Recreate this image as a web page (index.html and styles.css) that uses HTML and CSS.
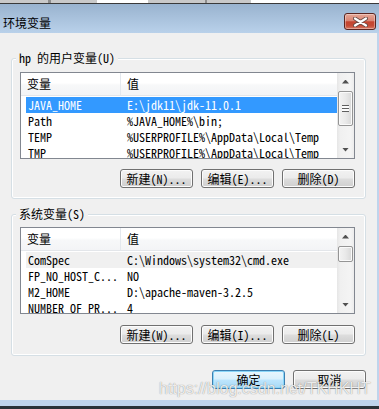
FILE: index.html
```html
<!DOCTYPE html>
<html lang="zh-CN">
<head>
<meta charset="utf-8">
<title>环境变量</title>
<link rel="stylesheet" href="styles.css">
</head>
<body>
<div class="screen">
  <div class="tabs">
    <span class="seg s48"></span><span class="seg sep"></span><span class="seg s46"></span><span class="seg white s51"></span><span class="seg s57"></span><span class="seg sep2"></span><span class="seg s44"></span><span class="seg white grow"></span>
  </div>
  <div class="window">
    <div class="titlebar">
      <span class="title">环境变量</span>
      <span class="close">
        <svg width="15" height="10" viewBox="0 0 15 10">
          <path d="M2 1.5 L13 8.5 M13 1.5 L2 8.5" stroke="#6a4a44" stroke-width="4" stroke-linecap="round"/>
          <path d="M2 1.5 L13 8.5 M13 1.5 L2 8.5" stroke="#ffffff" stroke-width="2.2" stroke-linecap="round"/>
        </svg>
      </span>
    </div>
    <div class="client">
      <div class="group">
        <div class="legend">hp 的用户变量(U)</div>
        <div class="listview">
          <div class="lv-main">
            <div class="lv-header"><div class="hcol h1">变量</div><div class="hcol h2">值</div></div>
            <div class="rows">
              <div class="row selected"><span class="c1">JAVA_HOME</span><span class="c2">E:\jdk11\jdk-11.0.1</span></div>
              <div class="row"><span class="c1">Path</span><span class="c2">%JAVA_HOME%\bin;</span></div>
              <div class="row"><span class="c1">TEMP</span><span class="c2">%USERPROFILE%\AppData\Local\Temp</span></div>
              <div class="row"><span class="c1">TMP</span><span class="c2">%USERPROFILE%\AppData\Local\Temp</span></div>
            </div>
          </div>
          <div class="scrollbar">
            <div class="sb-btn"><span class="arrow up"></span></div>
            <div class="track"><div class="thumb thumb-lg"><span class="grip"></span></div></div>
            <div class="sb-btn"><span class="arrow down"></span></div>
          </div>
        </div>
        <div class="btnrow">
          <span class="btn">新建(N)...</span>
          <span class="btn">编辑(E)...</span>
          <span class="btn">删除(D)</span>
        </div>
      </div>

      <div class="group group2">
        <div class="legend">系统变量(S)</div>
        <div class="listview lv2">
          <div class="lv-main">
            <div class="lv-header"><div class="hcol h1">变量</div><div class="hcol h2">值</div></div>
            <div class="rows">
              <div class="row inactive"><span class="c1">ComSpec</span><span class="c2">C:\Windows\system32\cmd.exe</span></div>
              <div class="row"><span class="c1">FP_NO_HOST_C...</span><span class="c2">NO</span></div>
              <div class="row"><span class="c1">M2_HOME</span><span class="c2">D:\apache-maven-3.2.5</span></div>
              <div class="row"><span class="c1">NUMBER_OF_PR...</span><span class="c2">4</span></div>
            </div>
          </div>
          <div class="scrollbar">
            <div class="sb-btn"><span class="arrow up"></span></div>
            <div class="track"><div class="thumb thumb-sm"></div></div>
            <div class="sb-btn"><span class="arrow down"></span></div>
          </div>
        </div>
        <div class="btnrow">
          <span class="btn">新建(W)...</span>
          <span class="btn">编辑(I)...</span>
          <span class="btn">删除(L)</span>
        </div>
      </div>

      <div class="dlgbtns">
        <span class="btn default">确定</span>
        <span class="btn">取消</span>
      </div>
    </div>
  </div>
  <div class="watermark">https://blog.csdn.net/TKHKHT</div>
</div>
</body>
</html>
```
FILE: styles.css
```css
* { box-sizing: border-box; }
html, body { margin: 0; padding: 0; }
body {
  width: 379px;
  height: 409px;
  overflow: hidden;
  background: #ffffff;
  font-family: "Noto Sans Mono CJK SC", "Noto Sans CJK SC", "Liberation Mono", monospace;
  font-size: 12px;
  color: #000;
}
.screen { position: relative; width: 379px; height: 409px; }

/* top strip */
.tabs { display: flex; height: 4px; border-bottom: 1px solid #3a3a3a; }
.seg { height: 3px; background: #c9c9c9; }
.seg.white { background: #ffffff; }
.s48 { width: 48px; }
.sep { width: 3px; background: #8d8d8d; }
.s46 { width: 46px; }
.s51 { width: 51px; }
.s57 { width: 57px; }
.sep2 { width: 2px; background: #8d8d8d; }
.s44 { width: 44px; }
.grow { flex: 1; }

/* window */
.window {
  background: #bfd4ec;
  padding-bottom: 6px;
  border-bottom: 3px solid #2a3238;
}
.titlebar {
  height: 29px;
  display: flex;
  justify-content: space-between;
  align-items: flex-start;
  background: linear-gradient(#99b3cf, #b9d1ea);
}
.title {
  margin: 12px 0 0 3px;
  line-height: 13px;
  font-family: "Noto Sans CJK SC", sans-serif;
  font-size: 12px;
  color: #000;
}
.close {
  margin: 9px 3px 0 0;
  width: 32px;
  height: 17px;
  display: flex;
  align-items: center;
  justify-content: center;
  border: 1px solid #5a2520;
  border-radius: 3px;
  background: linear-gradient(#e6a797 0%, #d98574 45%, #c4442f 52%, #c54b36 78%, #d77a66 100%);
  box-shadow: inset 0 0 0 1px rgba(255, 255, 255, 0.35);
}

.client {
  margin-right: 2px;
  height: 367px;
  background: #f0f0f0;
  padding: 25px 11px 0 11px;
  display: flex;
  flex-direction: column;
}

/* group boxes */
.group {
  border: 1px solid #d5dfe5;
  border-radius: 3px;
  box-shadow: inset 0 0 0 1px #ffffff;
  padding: 0 10px 10px 8px;
}
.group2 { margin-top: 15px; padding-bottom: 11px; }
.legend {
  width: max-content;
  margin: -7px 0 0 -4px;
  padding: 0 3px;
  line-height: 12px;
  height: 12px;
  background: #f0f0f0;
}

/* list view */
.listview {
  margin-top: 8px;
  height: 87px;
  display: flex;
  border: 1px solid #828790;
  background: #ffffff;
}
.lv2 { margin-top: 7px; }
.lv-main { flex: 1; overflow: hidden; }
.lv-header {
  height: 23px;
  display: flex;
  background: linear-gradient(#ffffff 0%, #ffffff 45%, #f7f8f9 55%, #f3f4f6 100%);
  border-bottom: 1px solid #e3e6ea;
  line-height: 22px;
  font-family: "Noto Sans CJK SC", sans-serif;
}
.hcol { padding-left: 6px; }
.h1 { width: 100px; border-right: 1px solid #e3e8ee; }
.rows { padding-top: 1px; margin-left: 5px; }
.row { height: 16px; line-height: 16px; display: flex; white-space: nowrap; }
.row .c1 { width: 101px; padding-left: 2px; flex: none; overflow: hidden; }
.row.selected { background: #3399ff; color: #ffffff; }
.row.inactive { background: #f0f0f0; }

/* scrollbar */
.scrollbar {
  width: 17px;
  display: flex;
  flex-direction: column;
  background: linear-gradient(90deg, #e6e6e6 0%, #f0f0f0 20%, #f4f4f4 80%, #ececec 100%);
}
.sb-btn { height: 17px; display: flex; align-items: center; justify-content: center; }
.arrow { width: 7px; height: 4px; background: #505050; }
.arrow.up { clip-path: polygon(50% 0, 100% 100%, 0 100%); }
.arrow.down { clip-path: polygon(0 0, 100% 0, 50% 100%); }
.track { flex: 1; padding: 1px 1px 0 1px; }
.thumb {
  border: 1px solid #959595;
  border-radius: 2px;
  background: linear-gradient(90deg, #f3f3f3 0%, #e9e9e9 50%, #d8d8d8 100%);
  box-shadow: inset 0 0 0 1px #fafafa;
  display: flex;
  align-items: center;
  justify-content: center;
}
.thumb-lg { height: 35px; }
.thumb-sm { height: 16px; }
.grip {
  width: 7px;
  height: 7px;
  background: repeating-linear-gradient(#5f5f5f 0 1px, #fbfbfb 1px 3px);
}

/* buttons */
.btnrow { margin-top: 10px; display: flex; justify-content: flex-end; gap: 8px; }
.group2 .btnrow { margin-top: 11px; }
.btn {
  width: 73px;
  height: 19px;
  display: flex;
  align-items: center;
  justify-content: center;
  border: 1px solid #707070;
  border-radius: 3px;
  background: linear-gradient(#f2f2f2 0%, #ebebeb 48%, #dddddd 52%, #cfcfcf 100%);
  box-shadow: inset 0 0 0 1px #fcfcfc;
  line-height: 12px;
}
.dlgbtns { margin-top: 14px; display: flex; justify-content: flex-end; gap: 8px; }
.btn.default {
  border-color: #3c7fb1;
  background: linear-gradient(#e8f6fd 0%, #d9f0fc 48%, #bee6fd 52%, #a7d9f5 100%);
  box-shadow: inset 0 0 0 1px #8ad6f8;
}

.watermark {
  position: absolute;
  left: 159px;
  top: 380px;
  font-family: "Liberation Sans", Arial, sans-serif;
  font-size: 16px;
  line-height: 18px;
  color: rgba(255, 255, 255, 0.85);
  text-shadow: 0 0 1px rgba(0, 0, 0, 0.5);
  white-space: nowrap;
}
```
